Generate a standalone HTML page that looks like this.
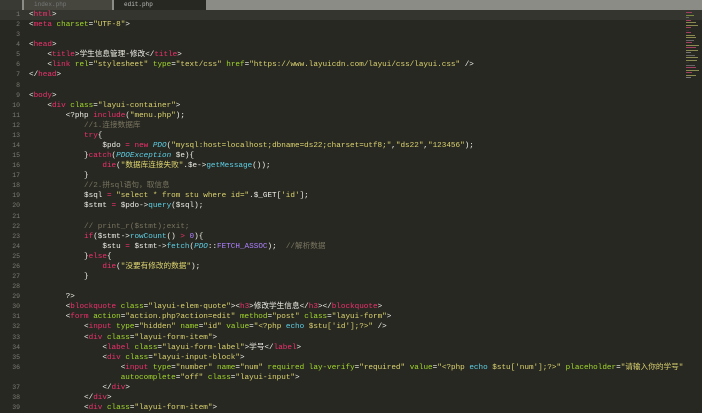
<!DOCTYPE html>
<html><head><meta charset="utf-8"><style>
body{margin:0;width:702px;height:407px;overflow:hidden;background:#272822;position:relative;font-family:"Liberation Mono","Noto Sans CJK SC",monospace;}
#tabs{position:absolute;left:0;top:0;width:702px;height:10px;background:#8c8c87;}
.t1{position:absolute;left:24px;top:0;width:88px;height:10px;background:#46463f;color:#777;font-size:6px;line-height:10px;padding-left:10px;box-sizing:border-box}
.t2{position:absolute;left:114px;top:0;width:92px;height:10px;background:#272822;color:#bbb;font-size:6px;line-height:10px;padding-left:10px;box-sizing:border-box}
.t0{position:absolute;left:0;top:0;width:22px;height:10px;background:#3a3a34}
#cur{position:absolute;left:0;top:10px;width:702px;height:10px;background:#34352e}
#g{position:absolute;left:0;top:10px;width:20px;text-align:right;color:#7b7b72;font-size:6.5px;line-height:10.08px;white-space:pre}
#c{position:absolute;left:29px;top:10px;color:#f0f0e8;font-size:7.65px;line-height:10.08px;white-space:pre;margin:0;font-family:inherit}
.p{color:#f0306e}.a{color:#a2d72c}.s{color:#ddd470}.m{color:#7a7560}.f{color:#5ed0e6}.v{color:#ae81ff}.i{color:#5ed0e6;font-style:italic}
#mm{position:absolute;left:686px;top:12px;width:14px}
#mm div{height:1px;margin-bottom:1.5px}
</style></head><body>
<div id="tabs"><div class="t0"></div><div class="t1">index.php</div><div class="t2">edit.php</div></div>
<div id="cur"></div>
<div id="g">1
2
3
4
5
6
7
8
9
10
11
12
13
14
15
16
17
18
19
20
21
22
23
24
25
26
27
28
29
30
31
32
33
34
35
36

37
38
39</div>
<pre id="c">&lt;<span class="p">html</span>&gt;
&lt;<span class="p">meta</span> <span class="a">charset</span>=<span class="s">"UTF-8"</span>&gt;

&lt;<span class="p">head</span>&gt;
    &lt;<span class="p">title</span>&gt;学生信息管理-修改&lt;/<span class="p">title</span>&gt;
    &lt;<span class="p">link</span> <span class="a">rel</span>=<span class="s">"stylesheet"</span> <span class="a">type</span>=<span class="s">"text/css"</span> <span class="a">href</span>=<span class="s">"https://www.layuicdn.com/layui/css/layui.css"</span> /&gt;
&lt;/<span class="p">head</span>&gt;

&lt;<span class="p">body</span>&gt;
    &lt;<span class="p">div</span> <span class="a">class</span>=<span class="s">"layui-container"</span>&gt;
        &lt;?php <span class="p">include</span>(<span class="s">"menu.php"</span>);
            <span class="m">//1.连接数据库</span>
            <span class="p">try</span>{
                $pdo <span class="p">=</span> <span class="p">new</span> <span class="i">PDO</span>(<span class="s">"mysql:host=localhost;dbname=ds22;charset=utf8;"</span>,<span class="s">"ds22"</span>,<span class="s">"123456"</span>);
            }<span class="p">catch</span>(<span class="i">PDOException</span> $e){
                <span class="p">die</span>(<span class="s">"数据库连接失败"</span>.$e-&gt;<span class="f">getMessage</span>());
            }
            <span class="m">//2.拼sql语句，取信息</span>
            $sql <span class="p">=</span> <span class="s">"select * from stu where id="</span>.$_GET[<span class="s">'id'</span>];
            $stmt <span class="p">=</span> $pdo-&gt;<span class="f">query</span>($sql);

            <span class="m">// print_r($stmt);exit;</span>
            <span class="p">if</span>($stmt-&gt;<span class="f">rowCount</span>() <span class="p">&gt;</span> <span class="v">0</span>){
                $stu <span class="p">=</span> $stmt-&gt;<span class="f">fetch</span>(<span class="i">PDO</span>::<span class="v">FETCH_ASSOC</span>);  <span class="m">//解析数据</span>
            }<span class="p">else</span>{
                <span class="p">die</span>(<span class="s">"没要有修改的数据"</span>);
            }

        ?&gt;
        &lt;<span class="p">blockquote</span> <span class="a">class</span>=<span class="s">"layui-elem-quote"</span>&gt;&lt;<span class="p">h3</span>&gt;修改学生信息&lt;/<span class="p">h3</span>&gt;&lt;/<span class="p">blockquote</span>&gt;
        &lt;<span class="p">form</span> <span class="a">action</span>=<span class="s">"action.php?action=edit"</span> <span class="a">method</span>=<span class="s">"post"</span> <span class="a">class</span>=<span class="s">"layui-form"</span>&gt;
            &lt;<span class="p">input</span> <span class="a">type</span>=<span class="s">"hidden"</span> <span class="a">name</span>=<span class="s">"id"</span> <span class="a">value</span>=<span class="s">"&lt;?php <span class="f">echo</span> $stu['id'];?&gt;"</span> /&gt;
            &lt;<span class="p">div</span> <span class="a">class</span>=<span class="s">"layui-form-item"</span>&gt;
                &lt;<span class="p">label</span> <span class="a">class</span>=<span class="s">"layui-form-label"</span>&gt;学号&lt;/<span class="p">label</span>&gt;
                &lt;<span class="p">div</span> <span class="a">class</span>=<span class="s">"layui-input-block"</span>&gt;
                    &lt;<span class="p">input</span> <span class="a">type</span>=<span class="s">"number"</span> <span class="a">name</span>=<span class="s">"num"</span> <span class="a">required</span> <span class="a">lay-verify</span>=<span class="s">"required"</span> <span class="a">value</span>=<span class="s">"&lt;?php <span class="f">echo</span> $stu['num'];?&gt;"</span> <span class="a">placeholder</span>=<span class="s">"请输入你的学号"</span>
                    <span class="a">autocomplete</span>=<span class="s">"off"</span> <span class="a">class</span>=<span class="s">"layui-input"</span>&gt;
                &lt;/<span class="p">div</span>&gt;
            &lt;/<span class="p">div</span>&gt;
            &lt;<span class="p">div</span> <span class="a">class</span>=<span class="s">"layui-form-item"</span>&gt;</pre>
<div id="mm">
<div style="width:6px;background:#a04060"></div><div style="width:8px;background:#7a8a40"></div><div style="width:3px;background:#666"></div><div style="width:5px;background:#a04060"></div><div style="width:10px;background:#8a8a50"></div><div style="width:12px;background:#8a8a50"></div><div style="width:5px;background:#a04060"></div><div style="width:3px;background:#333"></div><div style="width:5px;background:#a04060"></div><div style="width:9px;background:#8a8a50"></div><div style="width:10px;background:#8a8a50"></div><div style="width:8px;background:#666"></div><div style="width:6px;background:#a04060"></div><div style="width:13px;background:#8a8a50"></div><div style="width:10px;background:#a04060"></div><div style="width:12px;background:#8a8a50"></div><div style="width:5px;background:#777"></div><div style="width:9px;background:#666"></div><div style="width:12px;background:#8a8a50"></div><div style="width:11px;background:#8a8a50"></div><div style="width:3px;background:#333"></div><div style="width:9px;background:#666"></div><div style="width:10px;background:#a04060"></div><div style="width:13px;background:#8a8a50"></div><div style="width:6px;background:#a04060"></div><div style="width:10px;background:#8a8a50"></div><div style="width:5px;background:#777"></div>
</div>
</body></html>
